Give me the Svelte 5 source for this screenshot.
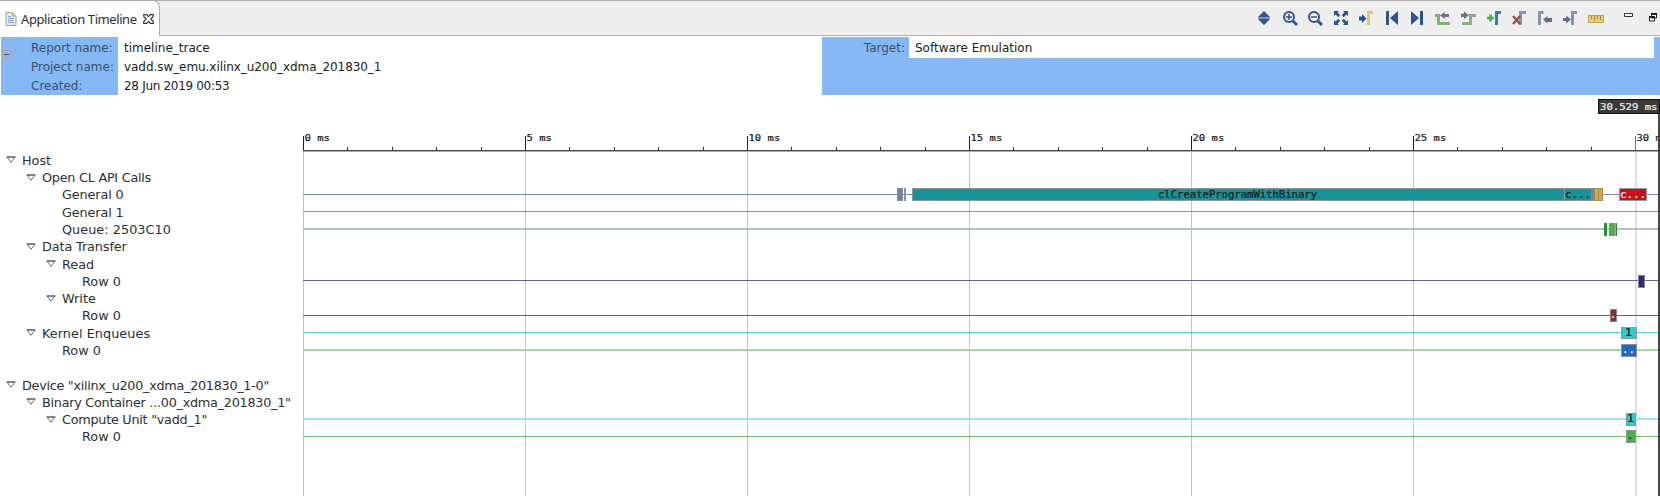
<script>
  const rowH = 17.31;
  const rows = [
    { d: 0, t: 'Host', open: true },
    { d: 1, t: 'Open CL API Calls', open: true, k: -0.25 },
    { d: 2, t: 'General 0', k: -0.12, c: '#7a8ba6' },
    { d: 2, t: 'General 1', k: -0.12, c: '#8497ae' },
    { d: 2, t: 'Queue: 2503C10', k: 0.05, c: '#b3c1cb', w: 2 },
    { d: 1, t: 'Data Transfer', open: true, k: -0.1 },
    { d: 2, t: 'Read', open: true },
    { d: 3, t: 'Row 0', c: '#6163a0' },
    { d: 2, t: 'Write', open: true },
    { d: 3, t: 'Row 0', c: '#98484d' },
    { d: 1, t: 'Kernel Enqueues', open: true, k: 0.06, c: '#50cfcf' },
    { d: 2, t: 'Row 0', c: '#a4d8a1', w: 2 },
    { d: 0, t: '' },
    { d: 0, t: 'Device "xilinx_u200_xdma_201830_1-0"', open: true, k: -0.29 },
    { d: 1, t: 'Binary Container ...00_xdma_201830_1"', open: true, k: -0.26 },
    { d: 2, t: 'Compute Unit "vadd_1"', open: true, k: -0.26, c: '#a0e4e5', w: 2 },
    { d: 3, t: 'Row 0', c: '#6cc268' }
  ];
  const lineY = [0, 0, 194, 211, 228, 0, 0, 280, 0, 315, 332, 349, 0, 0, 0, 418, 436];
  const majors = [0, 5, 10, 15, 20, 25, 30];
  const ticks = Array.from({ length: 30 }, (_, i) => i).filter((i) => i % 5);
  const px = (ms) => Math.round(303 + ms * 44.4);
  const spans = [
    { x: 897, y: 188, w: 6, h: 13, f: '#72839c', s: '#84909c' },
    { x: 904, y: 188, w: 2, h: 13, f: '#8294a5' },
    { x: 912, y: 188, w: 653, h: 13, f: '#179296', s: '#8a9a9c' },
    { x: 1564, y: 188, w: 28, h: 13, f: '#179296', s: '#8a9a9c' },
    { x: 1591, y: 188, w: 4, h: 13, f: '#72839c', s: '#858c94' },
    { x: 1594, y: 188, w: 5, h: 13, f: '#dba92c', s: '#a09060' },
    { x: 1598, y: 188, w: 5, h: 13, f: '#dfa62b', s: '#a09060' },
    { x: 1619, y: 188, w: 28, h: 13, f: '#cb1118', s: '#94989a' },
    { x: 1604, y: 223, w: 3, h: 13, f: '#209326' },
    { x: 1609, y: 223, w: 6, h: 13, f: '#50ae50', s: '#829084' },
    { x: 1615, y: 223, w: 1, h: 13, f: '#a8aaa8' },
    { x: 1616, y: 223, w: 1, h: 13, f: '#209326' },
    { x: 1638, y: 275, w: 7, h: 13, f: '#2c2c70', s: '#858591' },
    { x: 1610, y: 309, w: 7, h: 13, f: '#823236', s: '#8e8586' },
    { x: 1621, y: 327, w: 16, h: 12, f: '#35c9cb', s: '#879999' },
    { x: 1621, y: 344, w: 16, h: 13, f: '#2369bd', s: '#8492a0' },
    { x: 1626, y: 413, w: 10, h: 13, f: '#35c9cb', s: '#8f9292' },
    { x: 1626, y: 430, w: 10, h: 13, f: '#4aae4c', s: '#8c988c' }
  ];
  const labels = [
    { x: 1158, y: 197.8, t: 'clCreateProgramWithBinary', f: '#0c2022', l: 159 },
    { x: 1565, y: 198, t: 'c...', f: '#101c1c', l: 26 },
    { x: 1620, y: 198, t: 'c...', f: '#fff', l: 26 },
    { x: 1610, y: 318, t: '.', f: '#fff', l: 6 },
    { x: 1625, y: 336, t: '1', f: '#102020', l: 7 },
    { x: 1622, y: 353, t: '..', f: '#fff', l: 13 },
    { x: 1627, y: 422, t: '1', f: '#102020', l: 7 },
    { x: 1627, y: 439, t: '.', f: '#102020', l: 6 }
  ];
</script>

<main>
  <header class="tabs">
    <div class="tab">
      <svg width="12" height="14" viewBox="0 0 12 14"><path d="M1 .5h6.5L11 4v9.5H1z" fill="#e2ebf6" stroke="#9ea48f" /><path d="M7.5.5V4H11" fill="#d8cd92" stroke="#b2a875" /><path d="M3 4.5h3M3 6.5h6M3 8.5h6M3 10.5h6" stroke="#84a2d3" /></svg>
      <span>Application Timeline</span>
      <svg width="11" height="10" viewBox="0 0 11 10"><path d="M.7.6h3L5.5 2.7 7.3.6h3v1.9L7.8 5l2.5 2.5v1.9h-3L5.5 7.3 3.7 9.4h-3V7.5L3.2 5 .7 2.5z" fill="#fff" stroke="#333" stroke-width="1.1" /></svg>
    </div>
    <div class="tools">
      <svg viewBox="0 0 16 16"><path d="M8 1l6 6H2zM8 15l6-6H2z" fill="#31538c" /><path d="M2 8h12" stroke="#8195b8" stroke-width="2" /></svg>
      <svg viewBox="0 0 16 16"><g fill="none" stroke="#31538c" stroke-width="2"><circle cx="7" cy="7" r="5" /><path d="M11 11l4 4" stroke-width="3" /><path d="M4 7h6M7 4v6" stroke-width="1.5" /></g></svg>
      <svg viewBox="0 0 16 16"><g fill="none" stroke="#31538c" stroke-width="2"><circle cx="7" cy="7" r="5" /><path d="M11 11l4 4" stroke-width="3" /><path d="M4 7h6" stroke-width="1.5" /></g></svg>
      <svg viewBox="0 0 16 16"><path d="M1 1h5L4.6 2.6l2.6 2.6-2 2-2.6-2.6L1 6zM15 1v5l-1.6-1.4-2.6 2.6-2-2 2.6-2.6L10 1zM1 15v-5l1.6 1.4 2.6-2.6 2 2-2.6 2.6L6 15zM15 15h-5l1.4-1.6-2.6-2.6 2-2 2.6 2.6L15 10z" fill="#31538c" /></svg>
      <svg viewBox="0 0 16 16"><path d="M1 6.500h3V4l4.500 4.500L4 13v-2.500H1z" fill="#31538c" /><path d="M10.500 15V2.500H15" fill="none" stroke="#e2c966" stroke-width="3" /></svg>
      <svg viewBox="0 0 16 16"><path d="M2 1h3v14H2zM14 1v14L6 8z" fill="#31538c" /></svg>
      <svg viewBox="0 0 16 16"><path d="M11 1h3v14h-3zM2 1v14l8-7z" fill="#31538c" /></svg>
      <svg viewBox="0 0 16 16"><path d="M0 5.500h3.500v8H15" fill="none" stroke="#8aad84" stroke-width="3" /><path d="M5 5.500L9.500 2v2H14v3H9.500v2z" fill="#697386" /></svg>
      <svg viewBox="0 0 16 16"><path d="M2 13.500h8.500v-8H16" fill="none" stroke="#8aad84" stroke-width="3" /><path d="M1 3.800h3V1.500l5 3.800-5 3.800V7H1z" fill="#697386" /></svg>
      <svg viewBox="0 0 16 16"><path d="M10.500 15V2.500H15" fill="none" stroke="#317bb8" stroke-width="3" /><path d="M1 8h7M4.500 4.500v7" stroke="#43ad49" stroke-width="2.4" /></svg>
      <svg viewBox="0 0 16 16"><path d="M9.500 15V2.500H15" fill="none" stroke="#8297ad" stroke-width="3" /><path d="M2 6l7 8M9 6l-7 8" stroke="#98524f" stroke-width="2.4" /></svg>
      <svg viewBox="0 0 16 16"><path d="M2.500 15V2.500H6.500" fill="none" stroke="#8297ad" stroke-width="3" /><path d="M6 9.500L10.500 6v2H15v4h-4.500v1.500z" fill="#646e82" /></svg>
      <svg viewBox="0 0 16 16"><path d="M1 8h3V5.500l5 4-5 4V11H1z" fill="#646e82" /><path d="M10.500 15V2.500H15" fill="none" stroke="#8297ad" stroke-width="3" /></svg>
      <svg viewBox="0 0 16 16"><path d="M.5 5.500h15v7H.5z" fill="#dfcf78" stroke="#b6a454" /><path d="M3.500 6v3M6.500 6v4M9.500 6v3M12.500 6v4" stroke="#9d8d4a" /></svg>
    </div>
    <div class="win">
      <svg width="10" height="5" viewBox="0 0 10 5"><path d="M.5.5h8v3h-8z" fill="#fff" stroke="#333" /></svg>
      <svg width="8" height="9" viewBox="0 0 8 9"><path d="M2.500 1h5v4h-5zM.5 4h5v4h-5z" fill="#fff" stroke="#222" /><path d="M2 1h6M0 4h6" stroke="#222" stroke-width="2" /></svg>
    </div>
  </header>

  <section class="info">
    <div class="names">
      <svg class="fold" width="9" height="9" viewBox="0 0 9 9"><path d="M.5.5h8v8h-8z" fill="#8fb9ec" stroke="#9ca8b4" /><path d="M2 4.500h5" stroke="#3f5369" /></svg>
      <div>Report name:</div><div>Project name:</div><div>Created:</div>
    </div>
    <div class="values"><div>timeline_trace</div><div class="project">vadd.sw_emu.xilinx_u200_xdma_201830_1</div><div class="date">28 Jun 2019 00:53</div></div>
    <div class="target"><div class="tl">Target:</div><div class="tv">Software Emulation</div></div>
  </section>

  <section class="timeline">
    <div class="tree">
      {#each rows as r}
        <div class="row" style="height:{rowH}px;padding-left:{6 + r.d * 20}px;letter-spacing:{r.k ?? 0}px">
          <svg width="10" height="8" viewBox="0 0 10 8">{#if r.open}<path d="M1 1h8L5 6.300z" fill="#fff" stroke="#6b6e6c" /><path d="M.5 1h9" stroke="#505452" />{/if}</svg>
          <span>{r.t}</span>
        </div>
      {/each}
    </div>
    <svg class="chart" viewBox="303 96 1357 400" width="1357" height="400">
      <g shape-rendering="crispEdges">
        {#each majors as m}
          <rect x={px(m)} y="152" width={m === 30 ? 2 : 1} height="344" fill={m === 30 ? '#e0e0e0' : '#c3c3c7'} />
          <rect x={px(m)} y="136" width="1" height="15" fill={m === 30 ? '#777' : '#222'} />
        {/each}
        {#each ticks as m}
          <rect x={px(m)} y="147" width="1" height="4" fill="#333" />
        {/each}
        <rect x="1591" y="147" width="1" height="4" fill="#333" />
        <rect x="303" y="150" width="1357" height="1" fill="#484848" />
        <rect x="303" y="151" width="1357" height="1" fill="#aaa" />
        {#each rows as r, i}
          {#if r.c}<rect x="303" y={lineY[i]} width="1355" height={r.w ?? 1} fill={r.c} />{/if}
        {/each}
        {#each spans as s}
          <rect x={s.x} y={s.y} width={s.w} height={s.h} fill={s.s ?? s.f} />
          {#if s.s}<rect x={s.x + 1} y={s.y + 1} width={s.w - 2} height={s.h - 2} fill={s.f} />{/if}
        {/each}
      </g>
      {#each majors as m}
        <text class="ruler" x={px(m) + 1.5} y="141.3" textLength={(String(m).length + 3) * 6.35} lengthAdjust="spacingAndGlyphs" fill="#161616" stroke="#161616">{m} ms</text>
      {/each}
      {#each labels as l}
        <text x={l.x} y={l.y} textLength={l.l} lengthAdjust="spacingAndGlyphs" fill={l.f} stroke={l.f}>{l.t}</text>
      {/each}
      <rect x="1658" y="113" width="2" height="383" fill="#454545" />
      <rect x="1598.500" y="99.500" width="61" height="14" fill="#3b3b3b" stroke="#111" />
      <text class="ruler" x="1600" y="110" textLength="57.500" lengthAdjust="spacingAndGlyphs" fill="#f2f2f2" stroke="#f2f2f2">30.529 ms</text>
    </svg>
  </section>
</main>

<style>
  :global(body) { margin: 0; background: #fff; overflow: hidden; }
  main { width: 1660px; height: 496px; display: flex; flex-direction: column; font-family: "DejaVu Sans", sans-serif; color: #2d3030; overflow: hidden; }
  svg { display: block; flex: none; }
  .tabs { box-sizing: border-box; height: 36px; display: flex; align-items: center; background: #eee; border-top: 1px solid #b0b0b0; border-bottom: 1px solid #b2b2b2; flex: none; }
  .tab { box-sizing: border-box; width: 160px; height: 36px; display: flex; align-items: center; padding: 0 0 0 5px; background: #fff; border-right: 1px solid #aaa; border-top: 1px solid #aaa; border-radius: 0 7px 0 0; font: 13px "Noto Sans", sans-serif; letter-spacing: -0.42px; white-space: nowrap; }
  .tab span { width: 122px; margin-left: 4px; }
  .tools { display: flex; gap: 9.500px; margin-left: 1096px; padding-top: 0; }
  .tools svg { width: 16px; height: 16px; }
  .win { display: flex; gap: 15px; margin-left: 20px; align-items: flex-start; padding-bottom: 2px; }
  .info { display: flex; flex: none; height: 60px; padding-top: 1px; box-sizing: border-box; font-size: 12px; line-height: 19px; }
  .names { box-sizing: border-box; width: 117px; height: 58px; margin-left: 1px; padding: 2px 0 0 30px; background: #86b8f6; color: #36506c; position: relative; white-space: nowrap; }
  .fold { position: absolute; left: 1px; top: 13px; }
  .values { width: 704px; padding: 2px 0 0 6px; box-sizing: border-box; color: #202222; }
  .project { letter-spacing: -0.06px; }
  .date { letter-spacing: -0.31px; }
  .target { box-sizing: border-box; width: 838px; height: 58px; background: #86b8f6; display: flex; color: #202222; }
  .tl { width: 83px; text-align: right; padding: 2px 4px 0 0; color: #36506c; }
  .tv { width: 739px; height: 19px; padding: 2px 0 0 6px; background: #fff; box-sizing: content-box; }
  .timeline { display: flex; flex: none; height: 400px; }
  .tree { width: 303px; padding-top: 55.600px; box-sizing: border-box; font-size: 12.800px; }
  .row { display: flex; align-items: center; gap: 6px; box-sizing: border-box; white-space: nowrap; }
  .chart text { font: 10px "DejaVu Sans Mono", monospace; stroke-width: 0.2px; }
  .chart .ruler { font-size: 9.300px; }
</style>
